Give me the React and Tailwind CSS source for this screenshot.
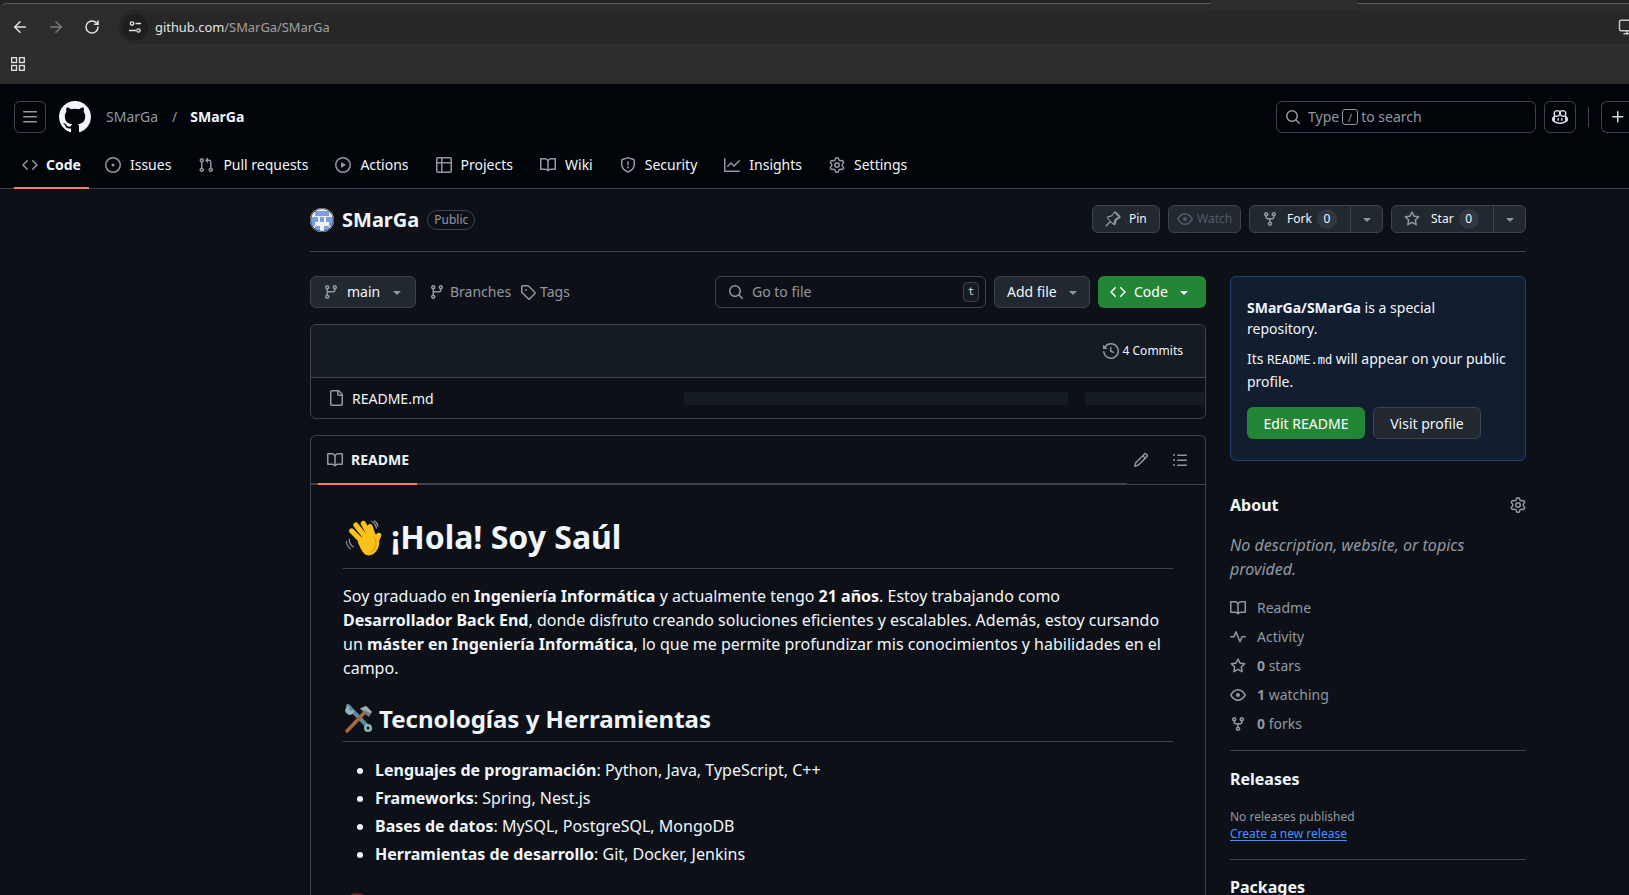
import React from 'react';
import { ArrowLeft, ArrowRight, RotateCw, Monitor } from 'lucide-react';

const paths = {
  bars: 'M1 2.75A.75.75 0 0 1 1.75 2h12.5a.75.75 0 0 1 0 1.5H1.75A.75.75 0 0 1 1 2.75Zm0 5A.75.75 0 0 1 1.75 7h12.5a.75.75 0 0 1 0 1.5H1.75A.75.75 0 0 1 1 7.75ZM1.75 12h12.5a.75.75 0 0 1 0 1.5H1.75a.75.75 0 0 1 0-1.5Z',
  github: 'M8 0c4.42 0 8 3.58 8 8a8.013 8.013 0 0 1-5.45 7.59c-.4.08-.55-.17-.55-.38 0-.27.01-1.13.01-2.2 0-.75-.25-1.23-.54-1.48 1.78-.2 3.65-.88 3.65-3.95 0-.88-.31-1.59-.82-2.15.08-.2.36-1.02-.08-2.12 0 0-.67-.22-2.2.82-.64-.18-1.32-.27-2-.27-.68 0-1.36.09-2 .27-1.53-1.03-2.2-.82-2.2-.82-.44 1.1-.16 1.92-.08 2.12-.51.56-.82 1.28-.82 2.15 0 3.06 1.86 3.75 3.64 3.95-.23.2-.44.55-.51 1.07-.46.21-1.61.55-2.33-.66-.15-.24-.6-.83-1.23-.82-.67.01-.27.38.01.53.34.19.73.9.82 1.13.16.45.68 1.31 2.69.94 0 .67.01 1.3.01 1.49 0 .21-.15.45-.55.38A7.995 7.995 0 0 1 0 8c0-4.42 3.58-8 8-8Z',
  code: 'm11.28 3.22 4.25 4.25a.75.75 0 0 1 0 1.06l-4.25 4.25a.749.749 0 0 1-1.275-.326.749.749 0 0 1 .215-.734L13.94 8l-3.72-3.72a.749.749 0 0 1 .326-1.275.749.749 0 0 1 .734.215Zm-6.56 0a.751.751 0 0 1 1.042.018.751.751 0 0 1 .018 1.042L2.06 8l3.72 3.72a.749.749 0 0 1-.326 1.275.749.749 0 0 1-.734-.215L.47 8.53a.75.75 0 0 1 0-1.06Z',
  issue: 'M8 9.5a1.5 1.5 0 1 0 0-3 1.5 1.5 0 0 0 0 3Z M8 0a8 8 0 1 1 0 16A8 8 0 0 1 8 0ZM1.5 8a6.5 6.5 0 1 0 13 0 6.5 6.5 0 0 0-13 0Z',
  pull: 'M1.5 3.25a2.25 2.25 0 1 1 3 2.122v5.256a2.251 2.251 0 1 1-1.5 0V5.372A2.25 2.25 0 0 1 1.5 3.25Zm5.677-.177L9.573.677A.25.25 0 0 1 10 .854V2.5h1A2.5 2.5 0 0 1 13.5 5v5.628a2.251 2.251 0 1 1-1.5 0V5a1 1 0 0 0-1-1h-1v1.646a.25.25 0 0 1-.427.177L7.177 3.427a.25.25 0 0 1 0-.354ZM3.75 2.5a.75.75 0 1 0 0 1.5.75.75 0 0 0 0-1.5Zm0 9.5a.75.75 0 1 0 0 1.5.75.75 0 0 0 0-1.5Zm8.25.75a.75.75 0 1 0 1.5 0 .75.75 0 0 0-1.5 0Z',
  play: 'M8 0a8 8 0 1 1 0 16A8 8 0 0 1 8 0ZM1.5 8a6.5 6.5 0 1 0 13 0 6.5 6.5 0 0 0-13 0Zm4.879-2.773 4.264 2.559a.25.25 0 0 1 0 .428l-4.264 2.559A.25.25 0 0 1 6 10.559V5.442a.25.25 0 0 1 .379-.215Z',
  table: 'M0 1.75C0 .784.784 0 1.75 0h12.5C15.216 0 16 .784 16 1.75v12.5A1.75 1.75 0 0 1 14.25 16H1.75A1.75 1.75 0 0 1 0 14.25ZM6.5 6.5v8h7.75a.25.25 0 0 0 .25-.25V6.5Zm8-1.5V1.75a.25.25 0 0 0-.25-.25H6.5V5Zm-13 1.5v7.75c0 .138.112.25.25.25H5v-8ZM5 5V1.5H1.75a.25.25 0 0 0-.25.25V5Z',
  book: 'M0 1.75A.75.75 0 0 1 .75 1h4.253c1.227 0 2.317.59 3 1.501A3.743 3.743 0 0 1 11.006 1h4.245a.75.75 0 0 1 .75.75v10.5a.75.75 0 0 1-.75.75h-4.507a2.25 2.25 0 0 0-1.591.659l-.622.621a.75.75 0 0 1-1.06 0l-.622-.621A2.25 2.25 0 0 0 5.258 13H.75a.75.75 0 0 1-.75-.75Zm7.251 10.324.004-5.073-.002-2.253A2.25 2.25 0 0 0 5.003 2.5H1.5v9h3.757a3.75 3.75 0 0 1 1.994.574ZM8.755 4.75l-.004 7.322a3.752 3.752 0 0 1 1.992-.572H14.5v-9h-3.495a2.25 2.25 0 0 0-2.25 2.25Z',
  shield: 'M7.467.133a1.748 1.748 0 0 1 1.066 0l5.25 1.68A1.75 1.75 0 0 1 15 3.48V7c0 1.566-.32 3.182-1.303 4.682-.983 1.498-2.585 2.813-5.032 3.855a1.697 1.697 0 0 1-1.33 0c-2.447-1.042-4.049-2.357-5.032-3.855C1.32 10.182 1 8.566 1 7V3.48a1.75 1.75 0 0 1 1.217-1.667Zm.61 1.429a.25.25 0 0 0-.153 0l-5.25 1.68a.25.25 0 0 0-.174.238V7c0 1.358.275 2.666 1.057 3.86.784 1.194 2.121 2.34 4.366 3.297a.196.196 0 0 0 .154 0c2.245-.956 3.582-2.104 4.366-3.298C13.225 9.666 13.5 8.36 13.5 7V3.48a.251.251 0 0 0-.174-.237l-5.25-1.68ZM8.75 4.75v3a.75.75 0 0 1-1.5 0v-3a.75.75 0 0 1 1.5 0ZM9 10.5a1 1 0 1 1-2 0 1 1 0 0 1 2 0Z',
  graph: 'M1.5 1.75V13.5h13.75a.75.75 0 0 1 0 1.5H.75a.75.75 0 0 1-.75-.75V1.75a.75.75 0 0 1 1.5 0Zm14.28 2.53-5.25 5.25a.75.75 0 0 1-1.06 0L7 7.06 4.28 9.78a.751.751 0 0 1-1.042-.018.751.751 0 0 1-.018-1.042l3.25-3.25a.75.75 0 0 1 1.06 0L10 7.94l4.72-4.72a.751.751 0 0 1 1.042.018.751.751 0 0 1 .018 1.042Z',
  gear: 'M8 0a8.2 8.2 0 0 1 .701.031C9.444.095 9.99.645 10.16 1.29l.288 1.107c.018.066.079.158.212.224.231.114.454.243.668.386.123.082.233.09.299.071l1.103-.303c.644-.176 1.392.021 1.82.63.27.385.506.792.704 1.218.315.675.111 1.422-.364 1.891l-.814.806c-.049.048-.098.147-.088.294.016.257.016.515 0 .772-.01.147.038.246.088.294l.814.806c.475.469.679 1.216.364 1.891a7.977 7.977 0 0 1-.704 1.217c-.428.61-1.176.807-1.82.63l-1.102-.302c-.067-.019-.177-.011-.3.071a5.909 5.909 0 0 1-.668.386c-.133.066-.194.158-.211.224l-.29 1.106c-.168.646-.715 1.196-1.458 1.26a8.006 8.006 0 0 1-1.402 0c-.743-.064-1.289-.614-1.458-1.26l-.289-1.106c-.018-.066-.079-.158-.212-.224a5.738 5.738 0 0 1-.668-.386c-.123-.082-.233-.09-.299-.071l-1.103.303c-.644.176-1.392-.021-1.82-.63a8.12 8.12 0 0 1-.704-1.218c-.315-.675-.111-1.422.363-1.891l.815-.806c.05-.048.098-.147.088-.294a6.214 6.214 0 0 1 0-.772c.01-.147-.038-.246-.088-.294l-.815-.806C.635 6.045.431 5.298.746 4.623a7.92 7.92 0 0 1 .704-1.217c.428-.61 1.176-.807 1.82-.63l1.102.302c.067.019.177.011.3-.071.214-.143.437-.272.668-.386.133-.066.194-.158.211-.224l.29-1.106C6.009.645 6.556.095 7.299.03 7.53.01 7.764 0 8 0Zm-.571 1.525c-.036.003-.108.036-.137.146l-.289 1.105c-.147.561-.549.967-.998 1.189-.173.086-.34.183-.5.29-.417.278-.97.423-1.529.27l-1.103-.303c-.109-.03-.175.016-.195.045-.22.312-.412.644-.573.99-.014.031-.021.11.059.19l.815.806c.411.406.562.957.53 1.456a4.709 4.709 0 0 0 0 .582c.032.499-.119 1.05-.53 1.456l-.815.806c-.081.08-.073.159-.059.19.162.346.353.677.573.989.02.03.085.076.195.046l1.102-.303c.56-.153 1.113-.008 1.53.27.161.107.328.204.501.29.447.222.85.629.997 1.189l.289 1.105c.029.109.101.143.137.146a6.6 6.6 0 0 0 1.142 0c.036-.003.108-.036.137-.146l.289-1.105c.147-.561.549-.967.998-1.189.173-.086.34-.183.5-.29.417-.278.97-.423 1.529-.27l1.103.303c.109.029.175-.016.195-.045.22-.313.411-.644.573-.99.014-.031.021-.11-.059-.19l-.815-.806c-.411-.406-.562-.957-.53-1.456a4.709 4.709 0 0 0 0-.582c-.032-.499.119-1.05.53-1.456l.815-.806c.081-.08.073-.159.059-.19a6.464 6.464 0 0 0-.573-.989c-.02-.03-.085-.076-.195-.046l-1.102.303c-.56.153-1.113.008-1.53-.27a4.44 4.44 0 0 0-.501-.29c-.447-.222-.85-.629-.997-1.189l-.289-1.105c-.029-.11-.101-.143-.137-.146a6.6 6.6 0 0 0-1.142 0ZM11 8a3 3 0 1 1-6 0 3 3 0 0 1 6 0ZM9.5 8a1.5 1.5 0 1 0-3.001.001A1.5 1.5 0 0 0 9.5 8Z',
  search: 'M10.68 11.74a6 6 0 0 1-7.922-8.982 6 6 0 0 1 8.982 7.922l3.04 3.04a.749.749 0 0 1-.326 1.275.749.749 0 0 1-.734-.215ZM11.5 7a4.499 4.499 0 1 0-8.997 0A4.499 4.499 0 0 0 11.5 7Z',
  pin: 'm11.294.984 3.722 3.722a1.75 1.75 0 0 1-.504 2.826l-1.327.613a3.089 3.089 0 0 0-1.707 2.084l-.584 2.454c-.317 1.332-1.972 1.8-2.94.832L5.75 11.311 1.78 15.28a.749.749 0 0 1-1.275-.326.749.749 0 0 1 .215-.734L4.69 10.25 2.487 8.047c-.968-.968-.5-2.623.832-2.94l2.454-.584a3.08 3.08 0 0 0 2.084-1.707l.613-1.327a1.75 1.75 0 0 1 2.824-.505Zm-1.82 1.06a.25.25 0 0 0-.403.072l-.613 1.328a4.586 4.586 0 0 1-3.103 2.54l-2.454.584a.25.25 0 0 0-.119.42l5.313 5.313a.25.25 0 0 0 .42-.119l.584-2.454a4.586 4.586 0 0 1 2.54-3.103l1.328-.613a.25.25 0 0 0 .072-.403Z',
  eye: 'M8 2c1.981 0 3.671.992 4.933 2.078 1.27 1.091 2.187 2.345 2.637 3.023a1.62 1.62 0 0 1 0 1.798c-.45.678-1.367 1.932-2.637 3.023C11.67 13.008 9.981 14 8 14c-1.981 0-3.671-.992-4.933-2.078C1.797 10.83.88 9.576.43 8.898a1.62 1.62 0 0 1 0-1.798c.45-.677 1.367-1.931 2.637-3.022C4.33 2.992 6.019 2 8 2ZM1.679 7.932a.12.12 0 0 0 0 .136c.411.622 1.241 1.75 2.366 2.717C5.176 11.758 6.527 12.5 8 12.5c1.473 0 2.825-.742 3.955-1.715 1.124-.967 1.954-2.096 2.366-2.717a.12.12 0 0 0 0-.136c-.412-.621-1.242-1.75-2.366-2.717C10.824 4.242 9.473 3.5 8 3.5c-1.473 0-2.825.742-3.955 1.715-1.124.967-1.954 2.096-2.366 2.717ZM8 10a2 2 0 1 1-.001-3.999A2 2 0 0 1 8 10Z',
  fork: 'M5 5.372v.878c0 .414.336.75.75.75h4.5a.75.75 0 0 0 .75-.75v-.878a2.25 2.25 0 1 1 1.5 0v.878a2.25 2.25 0 0 1-2.25 2.25h-1.5v2.128a2.251 2.251 0 1 1-1.5 0V8.5h-1.5A2.25 2.25 0 0 1 3.5 6.25v-.878a2.25 2.25 0 1 1 1.5 0ZM5 3.25a.75.75 0 1 0-1.5 0 .75.75 0 0 0 1.5 0Zm6.75.75a.75.75 0 1 0 0-1.5.75.75 0 0 0 0 1.5Zm-3 8.75a.75.75 0 1 0-1.5 0 .75.75 0 0 0 1.5 0Z',
  star: 'M8 .25a.75.75 0 0 1 .673.418l1.882 3.815 4.21.612a.75.75 0 0 1 .416 1.279l-3.046 2.97.719 4.192a.751.751 0 0 1-1.088.791L8 12.347l-3.766 1.98a.75.75 0 0 1-1.088-.79l.72-4.194L.818 6.374a.75.75 0 0 1 .416-1.28l4.21-.611L7.327.668A.75.75 0 0 1 8 .25Zm0 2.445L6.615 5.5a.75.75 0 0 1-.564.41l-3.097.45 2.24 2.184a.75.75 0 0 1 .216.664l-.528 3.084 2.769-1.456a.75.75 0 0 1 .698 0l2.77 1.456-.53-3.084a.75.75 0 0 1 .216-.664l2.24-2.183-3.096-.45a.75.75 0 0 1-.564-.41L8 2.694Z',
  branch: 'M9.5 3.25a2.25 2.25 0 1 1 3 2.122V6A2.5 2.5 0 0 1 10 8.5H6a1 1 0 0 0-1 1v1.128a2.251 2.251 0 1 1-1.5 0V5.372a2.25 2.25 0 1 1 1.5 0v1.836A2.493 2.493 0 0 1 6 7h4a1 1 0 0 0 1-1v-.628A2.25 2.25 0 0 1 9.5 3.25Zm-6 0a.75.75 0 1 0 1.5 0 .75.75 0 0 0-1.5 0Zm8.25-.75a.75.75 0 1 0 0 1.5.75.75 0 0 0 0-1.5ZM4.25 12a.75.75 0 1 0 0 1.5.75.75 0 0 0 0-1.5Z',
  tag: 'M1 7.775V2.75C1 1.784 1.784 1 2.75 1h5.025c.464 0 .91.184 1.238.513l6.25 6.25a1.75 1.75 0 0 1 0 2.474l-5.026 5.026a1.75 1.75 0 0 1-2.474 0l-6.25-6.25A1.752 1.752 0 0 1 1 7.775Zm1.5 0c0 .066.026.13.073.177l6.25 6.25a.25.25 0 0 0 .354 0l5.025-5.025a.25.25 0 0 0 0-.354l-6.25-6.25a.25.25 0 0 0-.177-.073H2.75a.25.25 0 0 0-.25.25ZM6 5a1 1 0 1 1 0 2 1 1 0 0 1 0-2Z',
  history: 'm.427 1.927 1.215 1.215a8.002 8.002 0 1 1-1.6 5.685.75.75 0 1 1 1.493-.154 6.5 6.5 0 1 0 1.18-4.458l1.358 1.358A.25.25 0 0 1 3.896 6H.25A.25.25 0 0 1 0 5.75V2.104a.25.25 0 0 1 .427-.177ZM7.75 4a.75.75 0 0 1 .75.75v2.992l2.028.812a.75.75 0 0 1-.557 1.392l-2.5-1A.751.751 0 0 1 7 8.25v-3.5A.75.75 0 0 1 7.75 4Z',
  file: 'M2 1.75C2 .784 2.784 0 3.75 0h6.586c.464 0 .909.184 1.237.513l2.914 2.914c.329.328.513.773.513 1.237v9.586A1.75 1.75 0 0 1 13.25 16h-9.5A1.75 1.75 0 0 1 2 14.25Zm1.75-.25a.25.25 0 0 0-.25.25v12.5c0 .138.112.25.25.25h9.5a.25.25 0 0 0 .25-.25V6h-2.75A1.75 1.75 0 0 1 9 4.25V1.5Zm6.75.062V4.25c0 .138.112.25.25.25h2.688l-.011-.013-2.914-2.914-.013-.011Z',
  pencil: 'M11.013 1.427a1.75 1.75 0 0 1 2.474 0l1.086 1.086a1.75 1.75 0 0 1 0 2.474l-8.61 8.61c-.21.21-.47.364-.756.445l-3.251.93a.75.75 0 0 1-.927-.928l.929-3.25c.081-.286.235-.547.445-.758l8.61-8.61Zm.176 4.823L9.75 4.81l-6.286 6.287a.253.253 0 0 0-.064.108l-.558 1.953 1.953-.558a.253.253 0 0 0 .108-.064Zm1.238-3.763a.25.25 0 0 0-.354 0L10.811 3.75l1.439 1.44 1.263-1.263a.25.25 0 0 0 0-.354Z',
  list: 'M5.75 2.5h8.5a.75.75 0 0 1 0 1.5h-8.5a.75.75 0 0 1 0-1.5Zm0 5h8.5a.75.75 0 0 1 0 1.5h-8.5a.75.75 0 0 1 0-1.5Zm0 5h8.5a.75.75 0 0 1 0 1.5h-8.5a.75.75 0 0 1 0-1.5ZM2 14a1 1 0 1 1 0-2 1 1 0 0 1 0 2Zm1-6a1 1 0 1 1-2 0 1 1 0 0 1 2 0ZM2 4a1 1 0 1 1 0-2 1 1 0 0 1 0 2Z',
  pulse: 'M6 2c.306 0 .582.187.696.471L10 10.731l1.304-3.26A.751.751 0 0 1 12 7h3.25a.75.75 0 0 1 0 1.5h-2.742l-1.812 4.528a.751.751 0 0 1-1.392 0L6 4.77 4.696 8.03A.75.75 0 0 1 4 8.5H.75a.75.75 0 0 1 0-1.5h2.742l1.812-4.529A.751.751 0 0 1 6 2Z',
  caret: 'm4.427 7.427 3.396 3.396a.25.25 0 0 0 .354 0l3.396-3.396A.25.25 0 0 0 11.396 7H4.604a.25.25 0 0 0-.177.427Z',
  plus: 'M7.75 2a.75.75 0 0 1 .75.75V7h4.25a.75.75 0 0 1 0 1.5H8.5v4.25a.75.75 0 0 1-1.5 0V8.5H2.75a.75.75 0 0 1 0-1.5H7V2.75A.75.75 0 0 1 7.75 2Z',
  copilot: 'M7.998 15.035c-4.562 0-7.873-2.914-7.998-3.749V9.338c.085-.628.677-1.686 1.588-2.065.013-.07.024-.143.036-.218.029-.183.06-.384.126-.612-.201-.508-.254-1.084-.254-1.656 0-.87.128-1.769.693-2.484.579-.733 1.494-1.124 2.724-1.261 1.206-.134 2.262.034 2.944.765.05.053.096.108.139.165.044-.057.094-.112.143-.165.682-.731 1.738-.899 2.944-.765 1.23.137 2.145.528 2.724 1.261.566.715.693 1.614.693 2.484 0 .572-.053 1.148-.254 1.656.066.228.098.429.126.612.012.076.024.148.037.218.924.385 1.522 1.471 1.591 2.095v1.872c0 .766-3.351 3.795-8.002 3.795Zm0-1.485c2.28 0 4.584-1.11 5.002-1.433V7.862l-.023-.116c-.49.21-1.075.291-1.727.291-1.146 0-2.059-.327-2.71-.991A3.222 3.222 0 0 1 8 6.303a3.24 3.24 0 0 1-.544.743c-.65.664-1.563.991-2.71.991-.652 0-1.236-.081-1.727-.291l-.023.116v4.255c.419.323 2.722 1.433 5.002 1.433ZM6.762 2.83c-.193-.206-.637-.413-1.682-.297-1.019.113-1.479.404-1.713.7-.247.312-.369.789-.369 1.554 0 .793.129 1.171.308 1.371.162.181.519.379 1.442.379.853 0 1.339-.235 1.638-.54.315-.322.527-.827.617-1.553.117-.935-.037-1.395-.241-1.614Zm4.155-.297c-1.044-.116-1.488.091-1.681.297-.204.219-.359.679-.242 1.614.091.726.303 1.231.618 1.553.299.305.784.54 1.638.54.922 0 1.28-.198 1.442-.379.179-.2.308-.578.308-1.371 0-.765-.123-1.242-.37-1.554-.233-.296-.693-.587-1.713-.7Z M6.25 9.037a.75.75 0 0 1 .75.75v1.501a.75.75 0 0 1-1.5 0V9.787a.75.75 0 0 1 .75-.75Zm4.25.75v1.501a.75.75 0 0 1-1.5 0V9.787a.75.75 0 0 1 1.5 0Z',
};

const Octicon = ({ name, size = 16, className = 'text-[#9198a1]' }) => (
  <svg viewBox="0 0 16 16" width={size} height={size} fill="currentColor" className={`shrink-0 ${className}`}>
    <path d={paths[name]} />
  </svg>
);

const WaveEmoji = () => (
  <svg viewBox="0 0 36 36" width="40" height="39" className="shrink-0">
    <g fill="none" stroke="#9aa0a6" strokeWidth="1" strokeLinecap="round">
      <path d="M2.700 21.500c0 2.500 1.300 5 3.500 6.800M5.200 19.500c0 2.700 1.500 5.500 3.800 7.300" />
      <path d="M26 3c2 1 3.800 3.400 4.400 6.500M28.500 2.500c1.700 1 2.800 2.700 3.200 5" />
    </g>
    <g fill="none" stroke="#fcc21b" strokeWidth="4.800" strokeLinecap="round">
      <path d="M19 23.500 L7.500 12" />
      <path d="M21.200 18.800 L11.500 6.500" />
      <path d="M24.900 17.200 L18.300 5" />
      <path d="M28 18 L24.500 8" />
      <path d="M28 26 L32.500 16" />
    </g>
    <path d="M13 22 L21 14 L30 15 L33 21 C33.500 28 29 34.500 23 34.500 C18.500 34.500 16.500 30 13 22Z" fill="#fcc21b" />
    <path d="M27.700 17.500c2.500 3 3.200 6 1.500 9.500-.7 1.500-1.700 3-3 4" fill="none" stroke="#e59600" strokeWidth="1" strokeLinecap="round" />
  </svg>
);

const ToolsEmoji = () => (
  <svg viewBox="0 0 30 30" width="30" height="30" className="shrink-0">
    <path d="M5 2 L27 25" stroke="#5e8a9c" strokeWidth="4" strokeLinecap="round" />
    <path d="M2.500 8c-1-3 1-6 4.500-6l-1 3 2 2 3-1c.5 3.500-3 6-6 4.500Z" fill="#8fb3c2" />
    <circle cx="25" cy="24" r="4" fill="#8fb3c2" />
    <circle cx="25" cy="24" r="1.500" fill="#0d1117" />
    <path d="M24 6 L4 27" stroke="#a5673f" strokeWidth="3.500" strokeLinecap="round" />
    <path d="M17 4.500 L23 2 L29 8 L26 13 L22 10 L20 8Z" fill="#6f7b84" />
    <path d="M17 4.500 L23 2 L29 8 L27 9Z" fill="#a3adb3" />
  </svg>
);

const Avatar = () => (
  <svg viewBox="0 0 24 24" width="24" height="24" className="shrink-0 rounded-full mt-[2px]">
    <rect width="24" height="24" fill="#eef0f4" />
    <rect x="5" y="3" width="14" height="5" fill="#7d9fdc" />
    <rect x="0" y="9" width="8" height="5" fill="#7d9fdc" />
    <rect x="16" y="9" width="8" height="5" fill="#7d9fdc" />
    <rect x="10" y="9" width="4" height="5" fill="#7d9fdc" />
    <rect x="0" y="14" width="5" height="4" fill="#7d9fdc" />
    <rect x="19" y="14" width="5" height="4" fill="#7d9fdc" />
    <rect x="5" y="18" width="5" height="6" fill="#7d9fdc" />
    <rect x="14" y="18" width="5" height="6" fill="#7d9fdc" />
    <circle cx="12" cy="12" r="11.500" fill="none" stroke="#3d444d" strokeWidth="1" />
  </svg>
);

const tabs = [
  ['code', 'Code'],
  ['issue', 'Issues'],
  ['pull', 'Pull requests'],
  ['play', 'Actions'],
  ['table', 'Projects'],
  ['book', 'Wiki'],
  ['shield', 'Security'],
  ['graph', 'Insights'],
  ['gear', 'Settings'],
];

const aboutRows = [
  ['book', null, 'Readme'],
  ['pulse', null, 'Activity'],
  ['star', '0', ' stars'],
  ['eye', '1', ' watching'],
  ['fork', '0', ' forks'],
];

const ChromeBar = () => (
  <div className="bg-[#2d2d2d] text-[#e3e3e3]">
    <div className="flex h-[10px] bg-[#242424]">
      <div className="w-[1211px] mt-[3px] border-t border-[#5a5a5a] rounded-tl-lg bg-[#2b2b2b]"></div>
      <div className="w-[146px] bg-[#2d2d2d]"></div>
      <div className="flex-1 mt-[3px] border-t border-[#5a5a5a] bg-[#2b2b2b]"></div>
    </div>
    <div className="flex h-[34px] items-center">
      <div className="flex w-[118px] items-center pl-[11px] gap-[18px]">
        <ArrowLeft size={18} strokeWidth={2} />
        <ArrowRight size={18} strokeWidth={2} className="text-[#7a7a7a]" />
        <RotateCw size={16} strokeWidth={2.200} className="ml-px" />
      </div>
      <div className="flex flex-1 h-full items-center rounded-l-full bg-[#272727] pl-1 overflow-hidden">
        <div className="flex w-[26px] h-[26px] items-center justify-center rounded-full bg-[#1f1f1f]">
          <svg viewBox="0 0 16 16" width="16" height="16" fill="none" stroke="#e3e3e3" strokeWidth="1.300">
            <circle cx="5" cy="4.500" r="1.700" />
            <path d="M8.500 4.500H14M2 11.500h7" />
            <circle cx="11.500" cy="11.500" r="1.700" />
          </svg>
        </div>
        <span className="ml-[7px] mt-[2px] text-[12.9px] text-[#e3e3e3]">
          github.com<span className="text-[#a0a0a0]">/SMarGa/SMarGa</span>
        </span>
        <Monitor size={18} className="ml-auto -mr-[7px] text-[#c7c7c7]" />
      </div>
    </div>
    <div className="flex h-[40px] items-center pl-[11px]">
      <svg viewBox="0 0 14 14" width="14" height="14" fill="none" stroke="#e3e3e3" strokeWidth="1.300">
        <rect x="0.700" y="0.700" width="4.800" height="4.800" />
        <rect x="8.500" y="0.700" width="4.800" height="4.800" />
        <rect x="0.700" y="8.500" width="4.800" height="4.800" />
        <rect x="8.500" y="8.500" width="4.800" height="4.800" />
      </svg>
    </div>
  </div>
);

const GithubHeader = () => (
  <header className="bg-[#010409] border-b border-[#3d444d] h-[105px]">
    <div className="flex h-[66px] items-center pl-[14px]">
      <div className="flex w-[32px] h-[32px] items-center justify-center rounded-md border border-[#3d444d]">
        <Octicon name="bars" />
      </div>
      <Octicon name="github" size={32} className="text-[#f0f6fc] ml-[13px]" />
      <span className="ml-[15px] -mt-[2px] text-[14px] text-[#9198a1]">SMarGa</span>
      <span className="ml-[14px] -mt-[2px] text-[14px] text-[#9198a1]">/</span>
      <span className="ml-[13px] -mt-[2px] text-[14px] font-bold text-[#f0f6fc]">SMarGa</span>
      <div className="ml-auto flex items-center">
        <div className="flex w-[260px] h-[32px] items-center rounded-md border border-[#3d444d] pl-[8px] text-[14px] text-[#9198a1]">
          <Octicon name="search" />
          <span className="ml-[7px] -mt-[2px]">Type</span>
          <span className="mx-[3px] flex w-[16px] h-[16px] items-center justify-center rounded-[3px] border border-[#9198a1] text-[11px] leading-none">/</span>
          <span className="-mt-[2px]">to search</span>
        </div>
        <div className="ml-[8px] flex w-[32px] h-[32px] items-center justify-center rounded-md border border-[#3d444d]">
          <Octicon name="copilot" className="text-[#d1d7e0]" />
        </div>
        <div className="ml-[12px] w-px h-[20px] bg-[#3d444d]"></div>
        <div className="ml-[12px] -mr-[4px] flex w-[32px] h-[32px] items-center justify-center rounded-l-md border border-r-0 border-[#3d444d]">
          <Octicon name="plus" className="text-[#d1d7e0]" />
        </div>
      </div>
    </div>
    <nav className="flex pl-[14px] h-[38px]">
      {tabs.map(([icon, label], i) => (
        <div key={label} className={`relative flex h-full items-center px-2 pb-[9px] text-[14px] text-[#f0f6fc] ${i === 0 ? 'gap-2 font-bold' : i === 1 ? 'ml-2 gap-[9px]' : 'ml-[11px] gap-[9px]'}`}>
          <Octicon name={icon} />
          <span>{label}</span>
          {i === 0 && <div className="absolute left-0 right-0 -bottom-px h-[2px] bg-[#f78166]"></div>}
        </div>
      ))}
    </nav>
  </header>
);

const SmallButton = ({ children, className = '' }) => (
  <div className={`flex h-[28px] items-center rounded-md border border-[#3d444d] bg-[#212830] text-[12px] text-[#f0f6fc] ${className}`}>
    {children}
  </div>
);

const Counter = ({ n }) => (
  <span className="ml-[5px] flex w-[20px] h-[20px] items-center justify-center rounded-full bg-[#2f3742] text-[12px]">{n}</span>
);

const RepoHeader = () => (
  <div className="flex h-[63px] items-center border-b border-[#3d444d] pb-[3px]">
    <Avatar />
    <span className="ml-[8px] mt-[2px] text-[20px] font-bold text-[#f0f6fc]">SMarGa</span>
    <span className="ml-[8px] mt-[2px] flex h-[20px] items-center rounded-full border border-[#3d444d] px-[6px] text-[12px] text-[#9198a1]">Public</span>
    <div className="ml-auto flex gap-2">
      <SmallButton className="w-[68px] pl-[12px]">
        <Octicon name="pin" />
        <span className="ml-[8px]">Pin</span>
      </SmallButton>
      <SmallButton className="w-[73px] pl-[8px] border-[#2a3038]">
        <Octicon name="eye" className="text-[#545a63]" />
        <span className="ml-[4px] text-[#545a63]">Watch</span>
      </SmallButton>
      <SmallButton className="w-[134px]">
        <div className="flex h-full w-[101px] items-center pl-[12px] border-r border-[#3d444d]">
          <Octicon name="fork" />
          <span className="ml-[9px]">Fork</span>
          <Counter n="0" />
        </div>
        <div className="flex flex-1 justify-center"><Octicon name="caret" /></div>
      </SmallButton>
      <SmallButton className="w-[135px]">
        <div className="flex h-full w-[102px] items-center pl-[12px] border-r border-[#3d444d]">
          <Octicon name="star" />
          <span className="ml-[11px]">Star</span>
          <Counter n="0" />
        </div>
        <div className="flex flex-1 justify-center"><Octicon name="caret" /></div>
      </SmallButton>
    </div>
  </div>
);

const Toolbar = () => (
  <div className="flex h-[32px] items-center text-[14px]">
    <div className="flex w-[106px] h-full items-center rounded-md border border-[#3d444d] bg-[#212830] pl-[12px] text-[#f0f6fc]">
      <Octicon name="branch" />
      <span className="ml-[8px] -mt-[2px]">main</span>
      <Octicon name="caret" className="text-[#9198a1] ml-[9px]" />
    </div>
    <Octicon name="branch" className="text-[#9198a1] ml-[13px]" />
    <span className="ml-[5px] -mt-[2px] text-[#9198a1]">Branches</span>
    <Octicon name="tag" className="text-[#9198a1] ml-[9px]" />
    <span className="ml-[4px] -mt-[2px] text-[#9198a1]">Tags</span>
    <div className="ml-auto flex w-[271px] h-full items-center rounded-md border border-[#3d444d] pl-[12px] pr-[6px] text-[#9198a1]">
      <Octicon name="search" />
      <span className="ml-[8px] -mt-[2px]">Go to file</span>
      <span className="ml-auto flex w-[16px] h-[20px] items-center justify-center rounded-[4px] border border-[#3d444d] bg-[#151b23] text-[11px] text-[#d1d7e0] [font-family:'DejaVu_Sans_Mono',monospace]">t</span>
    </div>
    <div className="ml-2 flex w-[96px] h-full items-center rounded-md border border-[#3d444d] bg-[#212830] pl-[12px] text-[#f0f6fc]">
      <span className="-mt-[2px]">Add file</span>
      <Octicon name="caret" className="text-[#9198a1] ml-[8px]" />
    </div>
    <div className="ml-2 flex w-[108px] h-full items-center rounded-md bg-[#238636] pl-[12px] text-white">
      <Octicon name="code" className="text-white" />
      <span className="ml-[8px] -mt-[2px]">Code</span>
      <Octicon name="caret" className="text-white ml-[8px]" />
    </div>
  </div>
);

const FileTable = () => (
  <div className="mt-[16px] rounded-md border border-[#3d444d] text-[14px]">
    <div className="flex h-[53px] items-center justify-end rounded-t-md border-b border-[#3d444d] bg-[#151b23] pr-[22px] text-[12px] text-[#f0f6fc]">
      <Octicon name="history" />
      <span className="ml-[4px]">4 Commits</span>
    </div>
    <div className="flex h-[40px] items-center pl-[17px] text-[#f0f6fc]">
      <Octicon name="file" />
      <span className="ml-[8px] w-[332px]">README.md</span>
      <div className="w-[384px] h-[13px] bg-[#151b23]"></div>
      <div className="ml-[17px] w-[119px] h-[13px] bg-[#151b23]"></div>
    </div>
  </div>
);

const Readme = () => (
  <div className="mt-[16px] rounded-t-md border border-b-0 border-[#3d444d] text-[#f0f6fc]">
    <div className="flex h-[49px] items-center pl-[16px] pr-[17px] border-b border-[#3d444d] relative">
      <Octicon name="book" />
      <span className="ml-[8px] -mt-[2px] text-[14px] font-bold">README</span>
      <div className="absolute left-0 -bottom-px w-[816px] h-[2px] bg-[#3d444d]"></div>
      <div className="absolute left-[7px] -bottom-px w-[99px] h-[2px] bg-[#f78166]"></div>
      <Octicon name="pencil" className="text-[#9198a1] ml-auto" />
      <Octicon name="list" className="text-[#9198a1] ml-[23px]" />
    </div>
    <div className="px-[32px] pt-[29px]">
      <h1 className="flex items-center gap-[8px] h-[55px] pb-[8px] border-b border-[#3d444d] text-[32px] font-bold leading-[1.25]">
        <WaveEmoji />
        <span>¡Hola! Soy Saúl</span>
      </h1>
      <p className="mt-[15px] text-[16px] leading-[24px]">
        Soy graduado en <b className="font-bold">Ingeniería Informática</b> y actualmente tengo <b className="font-bold">21 años</b>. Estoy trabajando como <b className="font-bold">Desarrollador Back End</b>, donde disfruto creando soluciones eficientes y escalables. Además, estoy cursando un <b className="font-bold">máster en Ingeniería Informática</b>, lo que me permite profundizar mis conocimientos y habilidades en el campo.
      </p>
      <h2 className="mt-[23px] flex items-center gap-[6px] h-[39px] pb-[7px] border-b border-[#3d444d] text-[24px] font-bold leading-[1.25]">
        <ToolsEmoji />
        <span>Tecnologías y Herramientas</span>
      </h2>
      <ul className="mt-[16px] list-disc pl-[32px] text-[16px] leading-[24px]">
        <li><b className="font-bold">Lenguajes de programación</b>: Python, Java, TypeScript, C++</li>
        <li className="mt-[4px]"><b className="font-bold">Frameworks</b>: Spring, Nest.js</li>
        <li className="mt-[4px]"><b className="font-bold">Bases de datos</b>: MySQL, PostgreSQL, MongoDB</li>
        <li className="mt-[4px]"><b className="font-bold">Herramientas de desarrollo</b>: Git, Docker, Jenkins</li>
      </ul>
      <svg viewBox="0 0 30 30" width="30" height="30" className="mt-[26px]">
        <circle cx="14" cy="15" r="14" fill="#5a2a28" />
      </svg>
    </div>
  </div>
);

const Sidebar = () => (
  <aside className="w-[296px] shrink-0">
    <div className="rounded-md border border-[#1f4173] bg-[#121d2f] px-[16px] pt-[20px] pb-[21px] text-[14px] leading-[21px] text-[#f0f6fc]">
      <p className="w-[240px]"><b className="font-bold">SMarGa/SMarGa</b> is a special repository.</p>
      <p className="mt-[9px]">Its <code className="text-[12px] [font-family:'DejaVu_Sans_Mono',monospace]">README.md</code> will appear on your public profile.</p>
      <div className="mt-[15px] flex gap-2">
        <div className="flex h-[32px] w-[118px] items-center justify-center rounded-md bg-[#238636] text-white">Edit README</div>
        <div className="flex h-[32px] w-[108px] items-center justify-center rounded-md border border-[#3d444d] bg-[#212830]">Visit profile</div>
      </div>
    </div>
    <div className="mt-[32px] flex items-center justify-between h-[24px]">
      <h2 className="text-[16px] font-bold text-[#f0f6fc]">About</h2>
      <Octicon name="gear" />
    </div>
    <p className="mt-[16px] text-[16px] leading-[24px] italic text-[#9198a1]">No description, website, or topics provided.</p>
    <ul className="mt-[12px] text-[14px] text-[#9198a1]">
      {aboutRows.map(([icon, count, label]) => (
        <li key={icon} className="flex h-[29px] items-center">
          <Octicon name={icon} />
          <span className="ml-[11px] whitespace-pre">
            {count && <b className="font-bold">{count}</b>}{label}
          </span>
        </li>
      ))}
    </ul>
    <div className="mt-[12px] border-t border-[#3d444d]"></div>
    <h2 className="mt-[16px] h-[24px] text-[16px] font-bold text-[#f0f6fc]">Releases</h2>
    <p className="mt-[17px] text-[12px] leading-[18px] text-[#9198a1]">No releases published</p>
    <p className="text-[12px] leading-[16px] text-[#4493f8] underline underline-offset-2">Create a new release</p>
    <div className="mt-[17px] border-t border-[#3d444d]"></div>
    <h2 className="mt-[15px] text-[16px] font-bold text-[#f0f6fc]">Packages</h2>
  </aside>
);

export default function App() {
  return (
    <div className="h-[895px] overflow-hidden bg-[#0d1117] [font-family:'Noto_Sans',sans-serif]">
      <ChromeBar />
      <GithubHeader />
      <div className="ml-[310px] w-[1216px]">
        <RepoHeader />
        <div className="mt-[24px] flex gap-[24px] items-start">
          <main className="w-[896px] shrink-0">
            <Toolbar />
            <FileTable />
            <Readme />
          </main>
          <Sidebar />
        </div>
      </div>
    </div>
  );
}
